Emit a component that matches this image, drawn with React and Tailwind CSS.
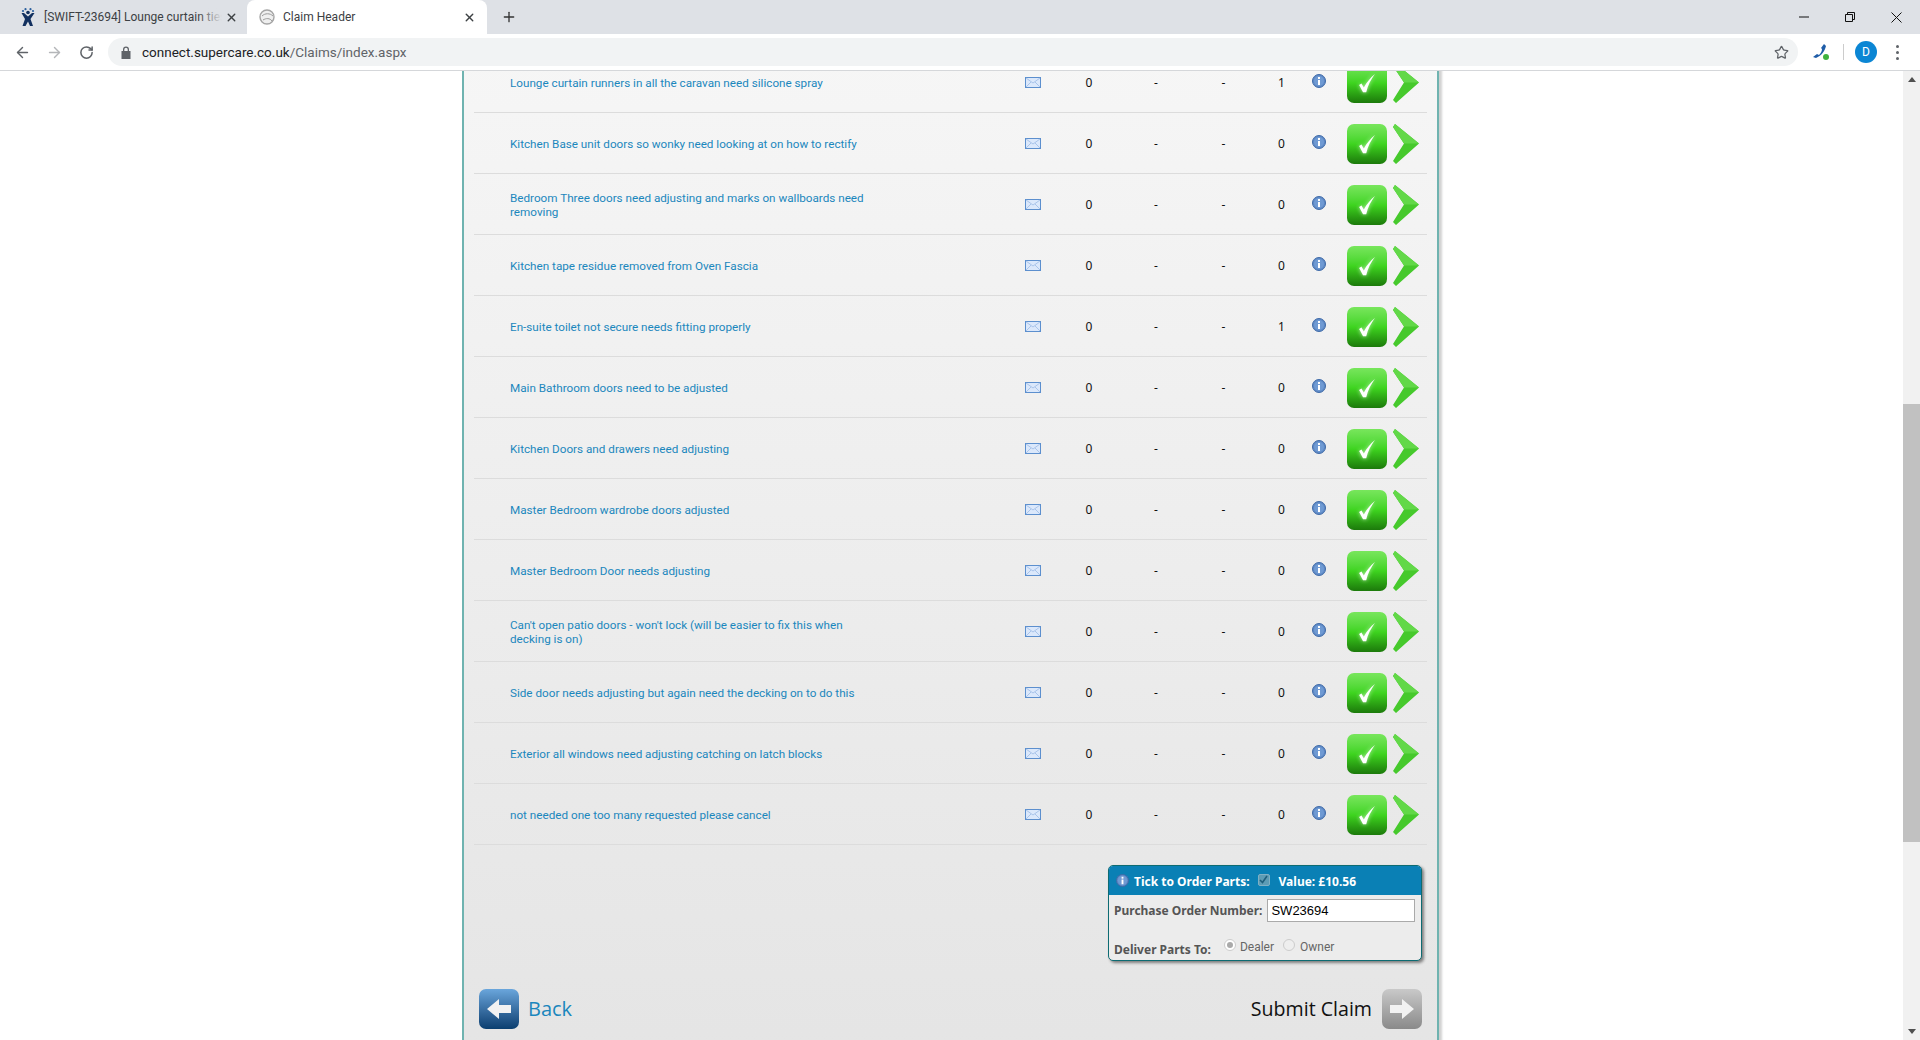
import React from "react";
import { ArrowLeft, ArrowRight, RotateCw, Star, X, Plus } from "lucide-react";

const rows = [
  { text: "Lounge curtain runners in all the caravan need silicone spray", count: 1 },
  { text: "Kitchen Base unit doors so wonky need looking at on how to rectify", count: 0 },
  { text: "Bedroom Three doors need adjusting and marks on wallboards need removing", count: 0 },
  { text: "Kitchen tape residue removed from Oven Fascia", count: 0 },
  { text: "En-suite toilet not secure needs fitting properly", count: 1 },
  { text: "Main Bathroom doors need to be adjusted", count: 0 },
  { text: "Kitchen Doors and drawers need adjusting", count: 0 },
  { text: "Master Bedroom wardrobe doors adjusted", count: 0 },
  { text: "Master Bedroom Door needs adjusting", count: 0 },
  { text: "Can't open patio doors - won't lock (will be easier to fix this when decking is on)", count: 0 },
  { text: "Side door needs adjusting but again need the decking on to do this", count: 0 },
  { text: "Exterior all windows need adjusting catching on latch blocks", count: 0 },
  { text: "not needed one too many requested please cancel", count: 0 },
];

const InfoIcon = ({ size = 14 }) => (
  <svg width={size} height={size} viewBox="0 0 14 14">
    <circle cx="7" cy="7" r="6.5" fill="#5f8ac6" stroke="#3f6aa8" />
    <circle cx="7" cy="7" r="5" fill="#6f9ad3" />
    <rect x="6" y="6" width="2" height="5" fill="#fff" />
    <rect x="6" y="3" width="2" height="2" fill="#fff" />
  </svg>
);

const MailIcon = () => (
  <svg width="16" height="11" viewBox="0 0 16 11">
    <rect x="0.5" y="0.5" width="15" height="10" fill="#dbe8fb" stroke="#5c8fce" />
    <path d="M1 1l7 5 7-5M1 10l5-5M15 10l-5-5" fill="none" stroke="#a9c4ea" />
  </svg>
);

const CheckButton = () => (
  <div className="w-10 h-10 rounded-[7px] bg-linear-to-b from-[#78e65c] via-[#3ed41f] to-[#1c7a0b] flex items-center justify-center">
    <svg width="18" height="19" viewBox="0 0 22 24" className="drop-shadow-[0_0_2px_rgba(255,255,255,0.7)]">
      <path d="M1 14l3-2 3 5C11 10 15 5 21 0c-5 7-9 14-11 23H6z" fill="#fff" />
    </svg>
  </div>
);

const Chevron = () => (
  <svg width="27" height="40" viewBox="0 0 27 40">
    <path d="M2 0l24 19.500L3 40l-3-3 11-17.500L0 3z" fill="#46c92c" strokeLinejoin="round" />
    <path d="M2 0l24 19.500H11L0 3z" fill="#62d848" />
  </svg>
);

const NavButton = ({ from, to, dir }) => (
  <div className={`w-10 h-10 rounded-[7px] bg-linear-to-b ${from} ${to} flex items-center justify-center`}>
    <svg width="24" height="20" viewBox="0 0 24 20" className={dir === "right" ? "" : "rotate-180"}>
      <path d="M0 6h12V0l12 10-12 10v-6H0z" fill="#f2f2f2" />
    </svg>
  </div>
);

const Row = ({ text, count }) => (
  <div className="grid grid-cols-[538px_42px_70px_64px_71px_45px_30px_13px_40px_6px_27px] items-center h-[61px] pt-[2px] border-b border-[#dcdcdc] text-[12px] text-[#111]">
    <a className="pl-9 w-[396px] text-[#1b87bd] text-[11.7px] leading-[14px] font-['Roboto',sans-serif]">{text}</a>
    <div className="flex justify-center -mt-[1px]"><MailIcon /></div>
    <div className="text-center">0</div>
    <div className="text-center">-</div>
    <div className="text-center">-</div>
    <div className="text-center">{count}</div>
    <div className="flex justify-center mb-1"><InfoIcon /></div>
    <div />
    <CheckButton />
    <div />
    <Chevron />
  </div>
);

const BrowserChrome = () => (
  <div className="h-[71px] shrink-0 bg-white border-b border-[#d5d7da] font-['Roboto',sans-serif] relative z-10">
    <div className="h-[34px] bg-[#dee1e6] flex text-[12px] text-[#3c4043]">
      <div className="w-[247px] flex items-center">
        <svg width="16" height="18" viewBox="0 0 16 18" className="ml-[20px]">
          <circle cx="8" cy="4.500" r="1.800" fill="#12305f" />
          <g fill="#2a5f9e"><circle cx="3" cy="3" r="1.100" /><circle cx="5.500" cy="1.200" r="1.100" /><circle cx="10.500" cy="1.200" r="1.100" /><circle cx="13" cy="3" r="1.100" /></g>
          <path d="M1.500 5l2.500 0 4 3.500 4-3.500 2.500 0-4 6 2.500 7h-3L8 13.500 5.500 18h-3L5 11z" fill="#12305f" />
        </svg>
        <span className="relative ml-[8px] w-[178px] overflow-hidden whitespace-nowrap">
          [SWIFT-23694] Lounge curtain ties
          <span className="absolute right-0 top-0 h-full w-6 bg-linear-to-r from-transparent to-[#dee1e6]" />
        </span>
        <X size={13} strokeWidth={2.5} className="ml-[3px] text-[#3c4043]" />
      </div>
      <div className="w-[240px] bg-white rounded-t-lg flex items-center">
        <svg width="16" height="16" viewBox="0 0 16 16" className="ml-3">
          <circle cx="8" cy="8" r="7" fill="#efefef" stroke="#a5a5a5" strokeWidth="1.400" />
          <path d="M3 7c3-3 8-3 11 0M4 11c3-2 7-2 9 1" fill="none" stroke="#9a9a9a" />
        </svg>
        <span className="ml-2 w-[180px]">Claim Header</span>
        <X size={13} strokeWidth={2.5} className="ml-0" />
      </div>
      <div className="flex items-center ml-[14px]"><Plus size={16} strokeWidth={2} className="text-[#333]" /></div>
      <div className="ml-auto flex items-center text-black">
        <svg width="10" height="10" viewBox="0 0 10 10" className="mr-[36px]"><path d="M0 5h10" stroke="#111" /></svg>
        <svg width="10" height="10" viewBox="0 0 10 10" className="mr-[36px]"><path d="M.5 2.500h7v7h-7zM2.500 2.500v-2h7v7h-2" fill="none" stroke="#111" /></svg>
        <svg width="11" height="11" viewBox="0 0 11 11" className="mr-[18px]"><path d="M.5.5l10 10M10.500.5l-10 10" stroke="#111" /></svg>
      </div>
    </div>
    <div className="h-9 flex items-center text-[#5f6368]">
      <ArrowLeft size={17} strokeWidth={2} className="ml-[14px]" />
      <ArrowRight size={17} strokeWidth={2} className="ml-[15px] text-[#b4b6b9]" />
      <RotateCw size={15} strokeWidth={2.4} className="ml-[16px]" />
      <div className="ml-[14px] w-[1690px] h-7 rounded-full bg-[#f1f3f4] flex items-center">
        <svg width="10" height="13" viewBox="0 0 10 13" className="ml-[13px]">
          <path d="M2 5V3.500a3 3 0 016 0V5h1.500v8H.5V5zM3.300 5h3.400V3.500a1.700 1.700 0 00-3.400 0z" fill="#5f6368" />
        </svg>
        <span className="ml-[11px] text-[13.5px] text-[#202124]">connect.supercare.co.uk<span className="text-[#5f6368]">/Claims/index.aspx</span></span>
        <Star size={15} strokeWidth={2} className="ml-auto mr-[9px]" />
      </div>
      <svg width="16" height="16" viewBox="0 0 16 16" className="ml-[15px]">
        <path d="M11 0l2 2c-1 5-5 10-10 12l-3-1 4-3 2 1c2-2 3-4 3-6l-1-1z" fill="#1f5da8" />
        <circle cx="13" cy="13" r="3" fill="#3fb23f" />
      </svg>
      <div className="w-px h-4 bg-[#ccc] ml-[14px]" />
      <div className="ml-[11px] w-[22px] h-[22px] rounded-full bg-[#0b86d4] text-white text-[12px] flex items-center justify-center">D</div>
      <div className="ml-[19px] flex flex-col gap-[3px]">
        <span className="w-[3px] h-[3px] rounded-full bg-[#5f6368]" />
        <span className="w-[3px] h-[3px] rounded-full bg-[#5f6368]" />
        <span className="w-[3px] h-[3px] rounded-full bg-[#5f6368]" />
      </div>
    </div>
  </div>
);

const OrderBox = () => (
  <div className="w-[314px] h-[96px] rounded-[5px] border border-[#0d6b72] bg-[#ececec] shadow-[2px_2px_3px_rgba(0,0,0,0.45)] overflow-hidden text-[12px]">
    <div className="h-[29px] bg-[#0a80b5] flex items-center text-white font-bold pl-[7px]">
      <InfoIcon size={13} />
      <span className="ml-[5px] mt-[3px]">Tick to Order Parts:</span>
      <span className="ml-[8px] w-3 h-3 rounded-[2px] bg-[#5d9cb5] border border-[#7fb0c4] flex items-center justify-center -mt-[2px]">
        <svg width="9" height="9" viewBox="0 0 9 9"><path d="M1 5l2.500 2.500L8 1" fill="none" stroke="#1f5f7c" strokeWidth="1.600" /></svg>
      </span>
      <span className="ml-[9px] mt-[3px]">Value: £10.56</span>
    </div>
    <div className="flex items-center h-[31px] pl-[5px] text-[#555] font-bold">
      <span className="mt-[1px]">Purchase Order Number:</span>
      <input
        readOnly
        value="SW23694"
        className="ml-[5px] w-[148px] h-[23px] bg-white border border-[#aaa] px-[3px] font-normal text-black text-[13px] font-['Liberation_Sans',sans-serif] outline-none"
      />
    </div>
    <div className="flex items-center pl-[5px] pt-[5px] text-[#555]">
      <span className="font-bold mt-[10px]">Deliver Parts To:</span>
      <span className="ml-[13px] w-3 h-3 rounded-full border border-[#ccc] bg-white flex items-center justify-center"><span className="w-[6px] h-[6px] rounded-full bg-[#aaa]" /></span>
      <span className="ml-[4px] text-[#666] font-normal font-['Roboto',sans-serif] mt-[3px]">Dealer</span>
      <span className="ml-[9px] w-3 h-3 rounded-full border border-[#ccc] bg-[#eee]" />
      <span className="ml-[5px] text-[#666] font-normal font-['Roboto',sans-serif] mt-[3px]">Owner</span>
    </div>
  </div>
);

export default function App() {
  return (
    <div className="h-[1040px] flex flex-col overflow-hidden bg-white font-['Noto_Sans',sans-serif]">
      <BrowserChrome />
      <div className="flex flex-1 min-h-0">
        <div className="flex-1 overflow-hidden pr-[2px]">
          <div className="w-[977px] mx-auto -mt-[19px] h-[1100px] border-x-2 border-[#6fb3b0] shadow-[3px_0_2px_rgba(0,0,0,0.18)] bg-linear-to-b from-[#f6f6f6] to-[#e3e3e3]">
            <div className="mx-[10px]">
              {rows.map((r, i) => <Row key={i} {...r} />)}
            </div>
            <div className="flex justify-end pr-[15px] mt-[20px]">
              <OrderBox />
            </div>
            <div className="flex items-center justify-between mt-[28px] pl-[15px] pr-[15px]">
              <div className="flex items-center gap-[9px]">
                <NavButton from="from-[#6aa6dc]" to="to-[#0a3f70]" dir="left" />
                <span className="text-[20px] text-[#1b87bd] font-['Open_Sans',sans-serif]">Back</span>
              </div>
              <div className="flex items-center gap-[10px]">
                <span className="text-[19.6px] text-[#111] font-['Open_Sans',sans-serif]">Submit Claim</span>
                <NavButton from="from-[#c9c9c9]" to="to-[#8a8a8a]" dir="right" />
              </div>
            </div>
          </div>
        </div>
        <div className="w-[17px] shrink-0 bg-[#f1f1f1] flex flex-col items-center relative">
          <div className="mt-[6px] w-0 h-0 border-x-4 border-x-transparent border-b-[5px] border-b-[#505050]" />
          <div className="absolute top-[333px] left-0 w-[17px] h-[438px] bg-[#c1c1c1]" />
          <div className="mt-auto mb-[6px] w-0 h-0 border-x-4 border-x-transparent border-t-[5px] border-t-[#505050]" />
        </div>
      </div>
    </div>
  );
}
